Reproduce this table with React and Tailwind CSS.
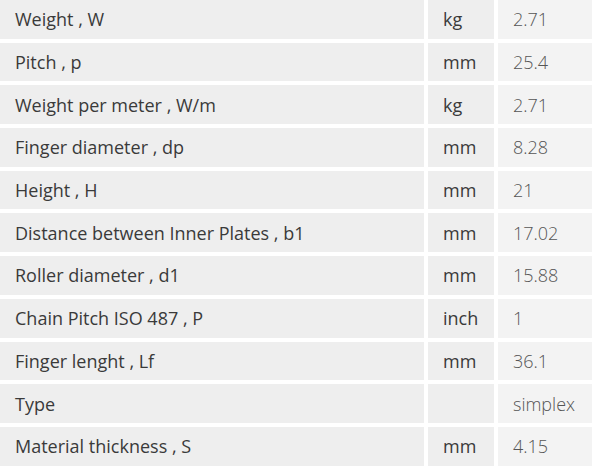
const rows = [
  ["Weight , W", "kg", "2.71"],
  ["Pitch , p", "mm", "25.4"],
  ["Weight per meter , W/m", "kg", "2.71"],
  ["Finger diameter , dp", "mm", "8.28"],
  ["Height , H", "mm", "21"],
  ["Distance between Inner Plates , b1", "mm", "17.02"],
  ["Roller diameter , d1", "mm", "15.88"],
  ["Chain Pitch ISO 487 , P", "inch", "1"],
  ["Finger lenght , Lf", "mm", "36.1"],
  ["Type", "", "simplex"],
  ["Material thickness , S", "mm", "4.15"],
]

const App = () => {
  return (
    <div className="w-[592px] h-[468px] overflow-hidden bg-white font-['Open_Sans',sans-serif] text-[18px]">
      <div className="flex flex-col gap-[4px]">
        {rows.map(([label, unit, value]) => (
          <div key={label} className="grid grid-cols-[424px_66px_94px] gap-[4px] h-[38.7px]">
            <div className="bg-[#eeeeee] text-[#3a3a3a] pl-[15px] pt-[1px] flex items-center">{label}</div>
            <div className="bg-[#eeeeee] text-[#3a3a3a] pl-[15px] pt-[1px] flex items-center">{unit}</div>
            <div className="bg-[#f3f3f3] text-[#555555] font-light pl-[15px] pt-[1px] flex items-center">{value}</div>
          </div>
        ))}
      </div>
    </div>
  )
}

export default App
